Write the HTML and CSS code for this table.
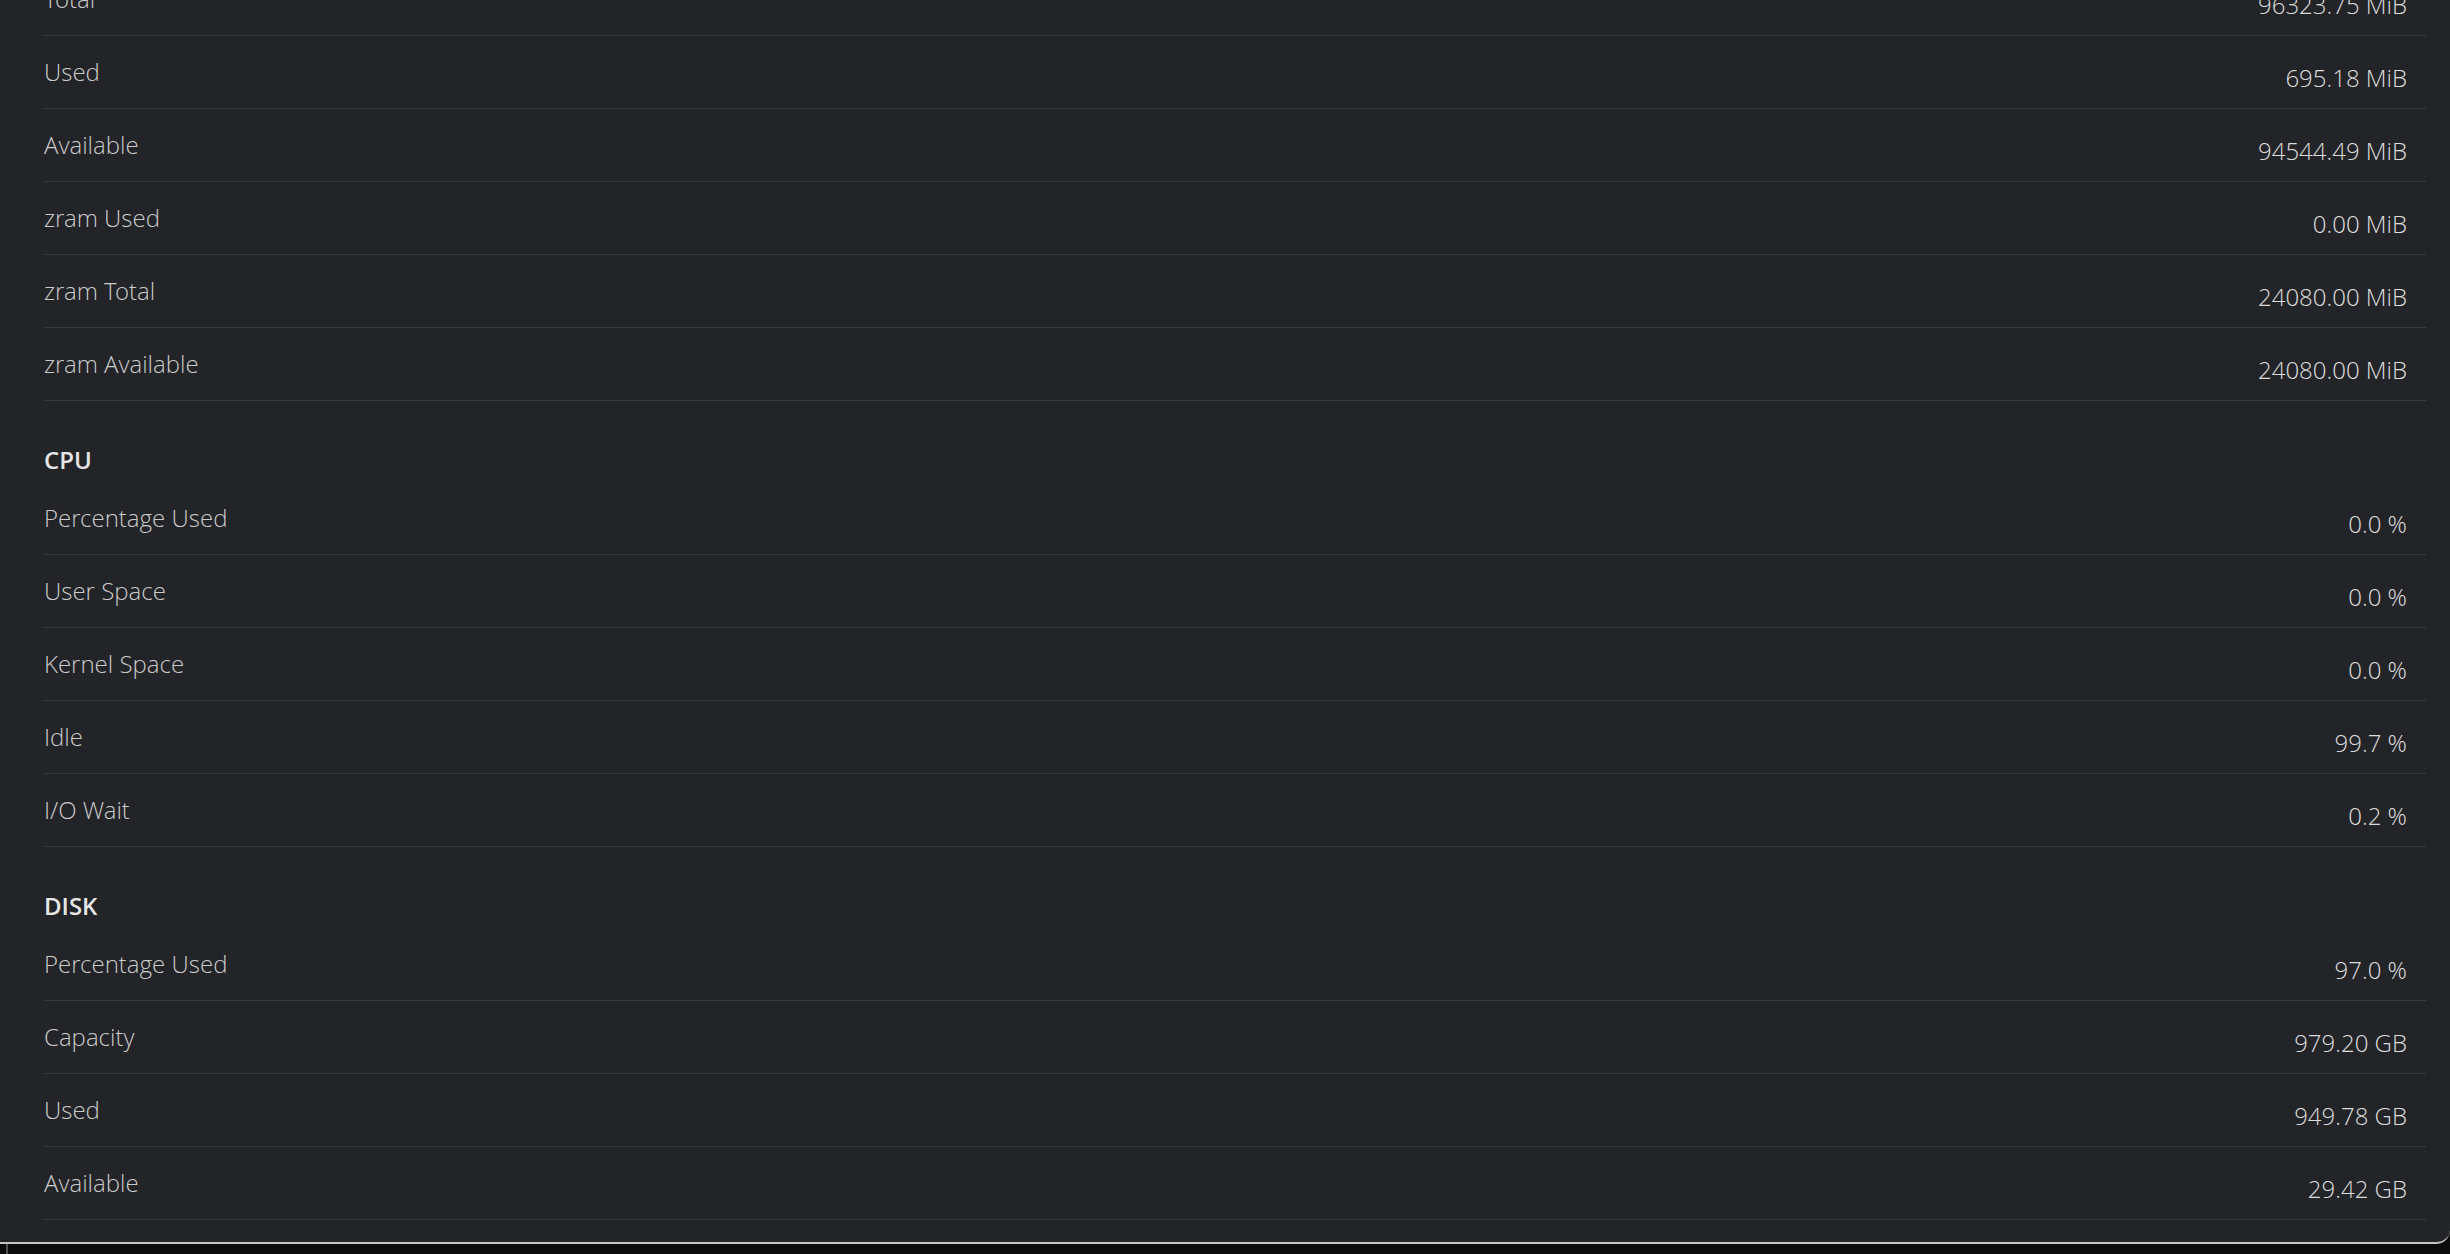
FILE: index.html
```html
<!DOCTYPE html>
<html lang="en">
<head>
<meta charset="utf-8">
<title>System Info</title>
<link rel="stylesheet" href="styles.css">
</head>
<body>
<main class="panel">
  <div class="scroll">
    <section class="group">
      <h2 class="group-title">MEMORY</h2>
      <div class="row"><span class="label">Total</span><span class="value">96323.75 MiB</span></div>
      <div class="row"><span class="label">Used</span><span class="value">695.18 MiB</span></div>
      <div class="row"><span class="label">Available</span><span class="value">94544.49 MiB</span></div>
      <div class="row"><span class="label">zram Used</span><span class="value">0.00 MiB</span></div>
      <div class="row"><span class="label">zram Total</span><span class="value">24080.00 MiB</span></div>
      <div class="row"><span class="label">zram Available</span><span class="value">24080.00 MiB</span></div>
    </section>
    <section class="group">
      <h2 class="group-title">CPU</h2>
      <div class="row"><span class="label">Percentage Used</span><span class="value">0.0 %</span></div>
      <div class="row"><span class="label">User Space</span><span class="value">0.0 %</span></div>
      <div class="row"><span class="label">Kernel Space</span><span class="value">0.0 %</span></div>
      <div class="row"><span class="label">Idle</span><span class="value">99.7 %</span></div>
      <div class="row"><span class="label">I/O Wait</span><span class="value">0.2 %</span></div>
    </section>
    <section class="group">
      <h2 class="group-title">DISK</h2>
      <div class="row"><span class="label">Percentage Used</span><span class="value">97.0 %</span></div>
      <div class="row"><span class="label">Capacity</span><span class="value">979.20 GB</span></div>
      <div class="row"><span class="label">Used</span><span class="value">949.78 GB</span></div>
      <div class="row"><span class="label">Available</span><span class="value">29.42 GB</span></div>
    </section>
  </div>
</main>
<div class="under"><span class="under-mark"></span></div>
</body>
</html>
```
FILE: styles.css
```css
html, body {
  margin: 0;
  padding: 0;
  background: #0b0b0b;
  overflow: hidden;
}

body {
  font-family: "Open Sans", "Liberation Sans", sans-serif;
  font-size: 24px;
}

.panel {
  box-sizing: border-box;
  height: 1244px;
  overflow: hidden;
  background: #232428;
  border-bottom: 2px solid #c4c4c4;
  border-bottom-right-radius: 14px;
  padding: 0 24px 0 44px;
}

.scroll {
  margin-top: -118px;
}

.group-title {
  box-sizing: border-box;
  height: 81px;
  margin: 0;
  padding-top: 42px;
  font-size: 24px;
  font-weight: 600;
  line-height: normal;
  color: #e6e6e6;
}

.row {
  box-sizing: border-box;
  height: 73px;
  display: flex;
  justify-content: space-between;
  align-items: flex-start;
  border-bottom: 1px solid #393a3e;
  padding-right: 19px;
  font-family: "Open Sans Light", "Open Sans", "Liberation Sans", sans-serif;
  font-weight: 300;
  line-height: normal;
}

.label {
  padding-top: 19px;
  color: #cbcbcb;
}

.value {
  padding-top: 25px;
  color: #dcdcdc;
}

.under {
  height: 10px;
  position: relative;
}

.under-mark {
  position: absolute;
  left: 6px;
  top: 0;
  width: 2px;
  height: 10px;
  background: #505050;
}
```
